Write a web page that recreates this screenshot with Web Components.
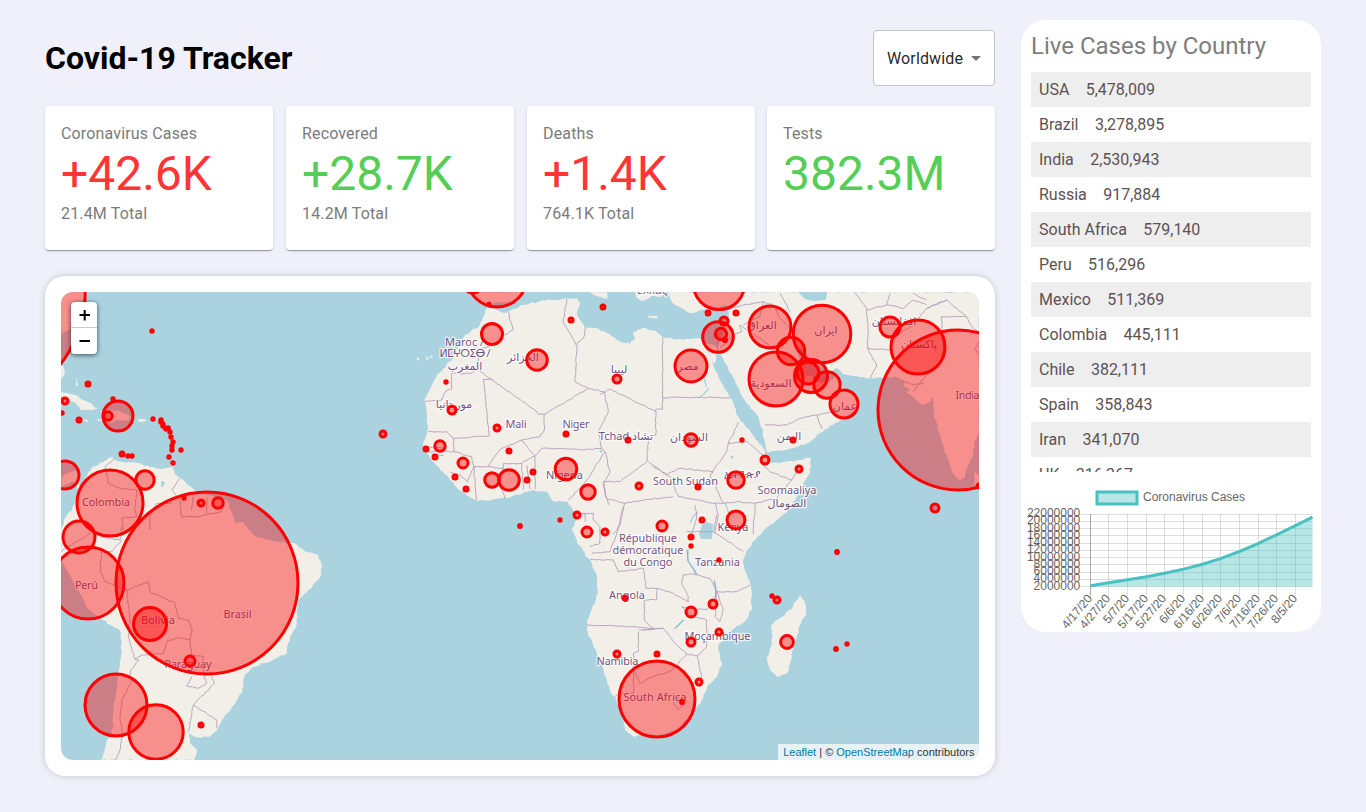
<!DOCTYPE html>
<html lang="en">
<head>
<meta charset="utf-8">
<title>Covid-19 Tracker</title>
<style>
  html, body { margin: 0; }
  body { background: #f0f0fa; font-family: Roboto, sans-serif; min-height: 812px; overflow: hidden; }
</style>
</head>
<body>
<tracker-app></tracker-app>
<script>
class Base extends HTMLElement {
  constructor() {
    super();
    this.attachShadow({ mode: 'open' });
  }
  draw(html) { this.shadowRoot.innerHTML = html; }
}

customElements.define('country-select', class extends Base {
  connectedCallback() {
    this.draw(`<style>
      :host { display: flex; align-items: center; box-sizing: border-box; width: 122px; height: 56px; padding: 0 6px 0 13px; letter-spacing: .13px;
        background: #fff; border: 1px solid #c4c4c4; border-radius: 4px; font-size: 16px; color: rgba(0,0,0,.87); justify-content: space-between; }
      svg { width: 24px; height: 24px; fill: #757575; }
    </style><slot></slot><svg viewBox="0 0 24 24"><path d="M7 10l5 5 5-5z"/></svg>`);
  }
});

customElements.define('info-box', class extends Base {
  connectedCallback() {
    this.draw(`<style>
      :host { display: block; box-sizing: border-box; width: 228px; height: 144px; padding: 16px; background: #fff; border-radius: 4px;
        box-shadow: 0 2px 1px -1px rgba(0,0,0,.2), 0 1px 1px 0 rgba(0,0,0,.14), 0 1px 3px 0 rgba(0,0,0,.12); }
      p { margin: 0; font-size: 16px; line-height: 24px; color: #7b7b7b; letter-spacing: .15px; }
      .label { height: 23px; }
      b { display: block; font-weight: 400; font-size: 48px; line-height: 57px; color: ${this.getAttribute('tone')}; }
    </style><p class="label">${this.getAttribute('label')}</p><b><slot></slot></b><p>${this.getAttribute('total') || ''}</p>`);
  }
});

const LAND = [
  // South America
  '61,478 68,473 75,470 80,479 79,487 83,488 85,478 92,467 103,462 112,457 117,461 123,462 137,463 150,467 162,469 172,467 175,474 180,478 188,485 197,491 207,495 217,497 227,500 232,513 235,523 243,522 257,537 270,540 280,542 293,543 307,552 318,555 322,567 320,577 307,592 298,600 297,623 290,637 287,653 273,660 253,667 244,677 242,693 232,707 222,720 215,732 208,737 195,737 188,733 190,743 197,750 194,760 101,760 107,740 112,733 114,707 117,683 119,670 122,653 120,631 103,620 87,608 77,588 67,570 61,560 61,530 65,518 72,510 77,498 78,488 72,481 61,487',
  // Africa
  '487,308 497,310 505,313 523,305 540,301 563,299 577,298 580,303 577,315 585,327 597,328 607,333 617,340 630,344 635,338 633,332 643,328 657,332 663,337 683,340 697,338 703,341 706,348 713,365 723,385 733,402 737,415 747,428 763,448 766,455 767,462 780,463 800,460 811,458 810,472 800,492 787,512 770,525 757,537 747,550 743,563 747,575 751,587 752,610 743,623 727,633 718,647 722,663 717,677 707,687 703,698 693,713 677,730 660,735 648,734 635,737 625,730 620,707 610,690 603,667 588,633 587,620 598,593 597,577 590,560 577,543 572,530 577,517 573,510 568,502 553,501 547,492 533,490 507,498 477,501 457,488 443,472 430,458 423,445 428,428 427,412 424,400 437,375 453,358 465,335 480,325',
  // Madagascar
  '800,595 805,603 806,615 802,620 793,650 788,672 778,677 770,670 767,657 772,643 771,625 782,617 793,607',
  // Middle East, Iran and South Asia
  '668,292 672,302 677,306 690,313 703,310 717,308 727,305 729,315 727,325 722,335 718,347 708,344 703,341 708,352 714,364 717,352 722,357 732,375 743,398 757,415 763,432 767,452 787,450 810,442 820,433 835,423 850,415 860,402 855,395 843,388 838,375 828,382 817,382 810,375 805,376 802,366 795,348 800,346 808,357 817,365 830,372 836,368 843,374 870,378 897,377 905,382 903,386 910,389 907,393 916,400 923,405 930,402 933,397 934,415 940,435 944,449 950,465 954,475 960,480 965,477 966,470 973,455 974,444 977,435 979,434 979,292',
  '975,472 979,476 979,490 974,485', '61,292 88,292 86,300 83,314 79,322 70,329 61,334', '61,364 64,368 65,374 62,379 61,377',
  '61,392 67,393 75,395 83,400 92,404 98,409 90,410 80,410 76,403 67,398 61,396',
  '100,411 108,410 120,411 131,417 128,421 118,420 110,423 100,420 108,417', '138,419 145,419 146,421 139,422', '97,418 103,420 98,421',
  '470,292 525,292 518,298 507,302 495,303 489,307 483,304 478,300', '590,292 607,292 607,299 600,297',
  '634,292 666,292 660,297 652,296 643,301 636,297', '647,316 657,316 658,318 650,318', '703,314 709,311 712,312 707,316', '76,377 78,385 76,386', '83,420 88,420 87,422', '169,465 175,463 174,467',
  '417,357 420,359 417,361','427,356 429,359 426,360','431,355 433,358 430,358'
];
const LINES = [
  // West Africa
  [350,285,'475,82 490,135 455,155 440,175 385,195 385,255 362,265 305,265 305,312 288,318 275,345 222,350|385,255 560,380 565,388 583,388 715,310 675,290 680,180 705,150 705,125|650,42 640,110 678,180|430,285 400,283 418,453 310,460 290,440 235,440|310,460 312,500 232,500|240,486 282,490|245,508 280,512|312,500 365,515 372,545 352,590 330,570 300,560|372,545 415,545 430,520 455,490 515,465 570,455 583,435 583,388|415,545 460,550 460,535 515,535 555,512 535,490 515,465|372,545 375,600 380,645|460,550 450,600 465,640|515,535 520,615|530,540 540,612|555,515 555,612|555,515 575,490 640,490 700,495 755,490 765,500 715,580 690,610 655,645|755,490 745,440 775,380 762,320 715,310|765,500 780,560 760,600 775,660|665,685 705,685 705,710'],
  // Sahara, the Horn and Arabia
  [600,285,'188,155 188,338 390,338|188,338 188,373 167,373 167,450 145,455 140,530 100,560 60,590 10,590|167,380 32,313 0,328|145,530 210,575 235,635 345,655 370,655 330,570 380,500 385,475 415,412|75,655 130,645 220,635|10,590 20,640 75,655|160,545 200,570 240,550 340,560|385,475 440,470 495,515|480,530 510,560 575,585 530,640 465,655 410,650 370,655|575,585 597,545|465,655 460,748|345,655 355,690 345,745|285,660 290,700 275,745|75,655 60,720 40,748|495,420 560,420 600,400 650,390 715,375|650,390 665,432|360,190 400,150 425,140 420,120 480,160 510,185 545,185|380,75 430,60 490,50 520,60 540,100 570,130|430,120 480,95 490,50|540,25 560,60 570,80|355,155 352,190 358,205'],
  // Iran to India
  [780,285,'225,25 260,70 265,140 262,190 290,240 270,280|262,190 330,195 350,150 400,120 440,70 500,45|260,75 320,60 370,70 400,45 440,60|330,25 320,60|365,285 400,300 430,295|400,320 440,270 480,240 490,190 485,95 560,95 580,130 597,140|597,210 585,190 597,170|440,70 500,45 530,70 560,95|400,25 440,45'],
  // Southern Africa
  [560,500,'90,178 160,180 175,215 250,205 258,265 290,265 290,300 253,300 253,360 280,385 180,378 82,375|290,265 340,280 385,305 385,290 365,250 370,225 400,222|95,160 150,155 170,100 190,20|40,42 100,40 100,60 120,80 120,130 90,140|250,390 310,385 345,430 380,462 412,467 440,440 440,360 400,350|235,395 235,455 220,460 220,580 180,580 165,590|310,385 237,390|220,510 240,550 290,525 330,515 380,462|412,467 425,530 420,560|400,222 450,235 470,275 530,275 570,255|470,275 490,330 480,365 465,350 470,275|460,95 550,155|380,95 460,95 470,45|340,610 360,590 380,605 355,628 340,610|400,350 365,320 440,330 455,310'],
  // South America
  [40,270,'225,565 195,590 205,640 240,655 290,660 285,720 290,740 245,745 250,780|420,625 395,660 420,690 425,740 470,740 545,725 550,690|460,680 455,720|500,680 500,730|330,780 330,740 350,700 395,700'],
  [40,520,'185,95 180,150 195,185 260,210 325,185 330,215 405,250 415,295 445,300 457,330 450,360 415,353 380,365 370,400 305,405 285,418 265,350 270,300 260,210 235,185|285,418 297,420 272,450 272,490 245,540 240,600 248,640 240,690 228,718|450,360 455,405 490,410 490,460 500,490 475,505 440,498 455,470|515,465 523,490 460,555 445,635|460,555 530,600 530,625|63,95 100,70 150,40|245,60 215,95 185,95|180,50 240,60 245,20']
];
const DOTS = `-32,292,117.3 152,331,1.2 88,384,2 65,401,3 62,413,1.2 79,420,2 113,399,1.2 118,416,15 108,416,4.2 153,419,1.2 161,420,1.2 161,422,1.3
163,424,1.2 163,426,1.2 166,429,1.3 168,428,1.3 170,432,1.2 171,437,1.2 173,442,1.2 172,446,1.2 172,450,1.2 181,450,1.2 169,457,1.2 173,463,1.2
122,454,2 128,456,1.2 132,456,1.2 65,475,14 110,503,33 145,480,9.2 184,498,1.2 201,503,3 218,503,5.3 207,583,91 79,537,16 88,583,36
150,624,16.5 190,661,5 116,705,31 156,732,27.2 201,725,2 497,277,30 473,283,10 489,304.5,1.2 492,334,10.5 537,360,10.3 571,320,2 603,307,2
446,382,1.2 452,410,4 497,428,3 566,434,2 509,451,2 440,446,5.2 426,449,2 435,457,2 463,463,5 455,477,2 466,489,2 492,480,7.3 509,480,10.3
533,472,2 527,480,2 566,469,10.8 588,492,7.2 577,515,3 560,520,1.2 520,526,1.4 383,434,3 587,532,5 605,532,3 719,284,25.6 708,313,2
736,313,2 724,321,4 718,337,15.3 721,334,5.7 725,340,1.6 691,366,16 617,379,4 770,327,21 822,334,28.8 791,351,13.7 776,379,27
811,376,16.5 808,373,11 827,385,13.2 844,404,14 691,440,6.3 628,440,2 742,440,1.2 793,440,2 765,460,4 799,469,3 736,480,8.3 639,486,3
698,487,2 662,526,5 702,520,2 736,520,9 691,537,2 691,546,1.2 890,327,10 918,347,27 958,410,80 935,508,4 979,486,2 719,560,1.2
837,552,1.4 625,598,2 691,612,5 713,604,4 691,642,4 719,632,3 617,654,3 657,654,2 657,699,38 682,702,1.4 699,682,3 772,596,1.2
777,600,3 787,642,6.4 836,649,1.4 847,644,1.2`;
// text, centre x, baseline y, width (0 leaves the natural width)
const NAMES = [
  ['Colombia',106,506,48],['Perú',86.5,589,23],['Bolivia',158,624,34],['Brasil',237.5,618,28],['Paraguay',188,668,47],
  ['Maroc /',464.5,346,39],['ⵍⵎⵖⵔⵉⴱ /',465,357,51],['المغرب',465,370,0],['الجزائر',523,361,0],['موريتانيا',454,408,0],
  ['Mali',516,428,21],['Niger',576,428,27],['Nigeria',564.5,479,37],['ليبيا',619,373,0],['مصر',688,370,0],['Tchad تشاد',626,440,0],
  ['السودان',689,441,0],['العراق',762,329,0],['ایران',826,334,0],['السعودية',771,387,0],['عمان',845,410,0],['اليمن',789,440,0],
  ['افغانستان',894,325,0],['پاکستان',919,348,0],['India',967.5,399,24],['ኢትዮጵያ',742,478,0],['South Sudan',685.5,485,65],
  ['Soomaaliya',787,494,59],['الصومال',787,507,0],['Kenya',733,531,31],['République',648,542,58],['démocratique',648,553.5,71],
  ['du Congo',648,566,49],['Tanzania',717.5,566,45],['Angola',627,599,36],['Moçambique',717.5,639.5,66],['Namibia',617.5,665,42],
  ['South Africa',655,701,63],['Ελλάς',652,294,30]
];

// Breaks each straight segment into short irregular steps, the same way on every load.
let seed = 7;
const rnd = () => (seed = (seed * 16807) % 2147483647) / 2147483647 - .5;
function rough(points, amp, close) {
  const out = [];
  const n = points.length;
  for (let i = 0; i < (close ? n : n - 1); i++) {
    const [ax, ay] = points[i], [bx, by] = points[(i + 1) % n];
    const len = Math.hypot(bx - ax, by - ay), k = Math.max(1, Math.round(len / 3));
    out.push([ax, ay]);
    for (let j = 1; j < k; j++) out.push([ax + (bx - ax) * j / k + rnd() * amp, ay + (by - ay) * j / k + rnd() * amp]);
  }
  if (!close) out.push(points[n - 1]);
  return 'M' + out.map(p => p[0].toFixed(1) + ' ' + p[1].toFixed(1)).join('L') + (close ? 'Z' : '');
}
const parse = s => s.trim().split(/\s+/).map(p => p.split(',').map(Number));

customElements.define('world-map', class extends Base {
  connectedCallback() {
    const land = LAND.map(s => rough(parse(s), 1.7, true)).join('');
    const lines = LINES.map(([ox, oy, s]) => s.split('|').map(l => rough(parse(l).map(([x, y]) => [ox + x / 3, oy + y / 3]), 1.1, false)).join('')).join('');
    const names = NAMES.map(([t, x, y, w]) => `<text x="${x}" y="${y}"${w ? ` textLength="${w}"` : ''}>${t}</text>`).join('');
    const dots = parse(DOTS).map(([x, y, r]) => `<circle cx="${x}" cy="${y}" r="${r}"/>`).join('');
    this.draw(`<style>
      :host { display: block; box-sizing: border-box; height: 500px; padding: 16px; background: #fff; border-radius: 20px; box-shadow: 0 0 8px -2px rgba(0,0,0,.3); }
      .frame { position: relative; height: 468px; border-radius: 12px; overflow: hidden; background: #aad3df; }
      .frame > svg { display: block; width: 918px; height: 468px; }
      text { font: 11px "Noto Sans", "DejaVu Sans", sans-serif; fill: #76527f; stroke: #fff; stroke-opacity: .75; stroke-width: 2.5px; paint-order: stroke; text-anchor: middle; stroke-linejoin: round; }
      .dots { fill: red; fill-opacity: .4; stroke: red; stroke-width: 3; }
      .zoom { position: absolute; left: 10px; top: 10px; width: 26px; border-radius: 4px; background: #fff; box-shadow: 0 1px 5px rgba(0,0,0,.65); }
      .zoom span { display: block; height: 25px; }
      .zoom span + span { border-top: 1px solid #ccc; height: 26px; }
      .zoom svg { display: block; width: 26px; height: 25px; stroke: #000; stroke-width: 2; }
      .credit { position: absolute; right: 0; bottom: 0; padding: 0 4.5px 0 5px; background: rgba(255,255,255,.7); color: #333; font: 11px/16px "Liberation Sans", Arial, sans-serif; white-space: nowrap; }
      a { color: #0078a8; }
    </style>
    <div class="frame">
      <svg viewBox="61 292 918 468">
        <path d="${land}" fill="#f2efe9"/>
        <g fill="#aad3df">
          <path d="M798 292h29l-1 8-13 1-8-2z"/><path d="M702 525l4-3 7 2-1 15-11 0-2-5z"/><path d="M161 481l4 1-2 5-2 0z"/>
          <path d="M722 353l-4 9 1-10z"/><circle cx="601" cy="451" r="1.5"/><circle cx="732" cy="457" r="1.5"/>
        </g>
        <g fill="none" stroke="#aad3df" stroke-width="1.4">
          <path d="M688 549l0 12 5 8 3 6M715 582l1 10-1 8M698 398l6-4 5-6M706 387l-2-12M725 502l3 9 6 6M690 523l3-6 5-5M676 628l8-8M232 714l-6 9M725 312l1 20"/>
        </g>
        <path d="M687 550l1 11 6 8 3 6M714 580l2 10-1 8M674 629l9-9" fill="none" stroke="#86afc9" stroke-width="1"/>
        <path d="${lines}" fill="none" stroke="#b79dba" stroke-width=".9" stroke-linejoin="round"/>
        <g>${names}</g>
        <g class="dots">${dots}</g>
      </svg>
      <div class="zoom">
        <span><svg viewBox="0 0 26 25"><path d="M8.5 13h10.5M13.7 8v10.5"/></svg></span>
        <span><svg viewBox="0 0 26 25"><path d="M8.5 13h10.5"/></svg></span>
      </div>
      <div class="credit"><a>Leaflet</a> | © <a>OpenStreetMap</a> contributors</div>
    </div>`);
  }
});

customElements.define('country-table', class extends Base {
  connectedCallback() {
    const rows = [['USA','5,478,009'],['Brazil','3,278,895'],['India','2,530,943'],['Russia','917,884'],['South Africa','579,140'],['Peru','516,296'],
      ['Mexico','511,369'],['Colombia','445,111'],['Chile','382,111'],['Spain','358,843'],['Iran','341,070'],['UK','316,367']];
    this.draw(`<style>
      :host { display: block; height: 400px; overflow: hidden; color: #5d5252; font-size: 16px; }
      div { display: flex; align-items: center; gap: 16.4px; height: 35px; padding: 0 8px; }
      div:nth-of-type(odd) { background: #eee; }
    </style>${rows.map(([c, n]) => `<div><span>${c}</span><span>${n}</span></div>`).join('')}`);
  }
});

customElements.define('cases-chart', class extends Base {
  connectedCallback() {
    const xs = [1090.5,1108.5,1127.5,1146.5,1164.5,1183.5,1202.5,1220.5,1239.5,1258.5,1276.5,1295.5];
    const ds = ['4/17/20','4/27/20','5/7/20','5/17/20','5/27/20','6/6/20','6/16/20','6/26/20','7/6/20','7/16/20','7/26/20','8/5/20'];
    const ys = [514.5,521.5,528.5,535.5,543.5,550.5,557.5,564.5,572.5,579.5,586.5];
    const curve = 'M1090.5 585.7L1108.5 582.7L1127.5 579.7L1146.5 576.7L1164.5 573.3L1183.5 569.1L1202.5 564.3L1220.5 558.6L1239.5 551.5L1258.5 543.4L1276.5 534.8L1295.5 525.7L1312.5 517.2';
    this.draw(`<style>
      :host { display: block; margin: 0 -10px; height: 160px; }
      svg { display: block; width: 300px; height: 160px; }
      text { font: 12px "Liberation Sans", Arial, sans-serif; fill: #666; }
      .end { text-anchor: end; }
    </style>
    <svg viewBox="1021 472 300 160">
      <rect x="1097" y="492" width="40" height="12" fill="rgba(75,192,192,.4)" stroke="#4bc0c0" stroke-width="3"/>
      <text x="1143" y="501.3">Coronavirus Cases</text>
      <path d="${ys.map(y => `M1080 ${y}H1312.5`).join('')}${xs.slice(1).map(x => `M${x} 514V596.5`).join('')}" stroke="rgba(0,0,0,.13)" fill="none"/>
      <path d="M1090.5 514V596.5" stroke="rgba(0,0,0,.32)"/>
      <path d="${curve}V586.5H1090.5Z" fill="rgba(75,192,192,.4)"/>
      <path d="${curve}" fill="none" stroke="#4bc0c0" stroke-width="3" stroke-linejoin="round"/>
      ${ys.map((y, i) => `<text class="end" x="1080.3" y="${(513.2 + i * 7.24 + 4).toFixed(1)}">${22 - 2 * i}000000</text>`).join('')}
      ${xs.map((x, i) => `<text class="end" transform="translate(${x - 1.5} 595.5) rotate(-50)" x="0" y="5">${ds[i]}</text>`).join('')}
    </svg>`);
  }
});

customElements.define('side-panel', class extends Base {
  connectedCallback() {
    this.draw(`<style>
      :host { display: block; box-sizing: border-box; width: 300px; height: 612px; padding: 10px; background: #fff; border-radius: 25px; overflow: hidden; }
      h3 { margin: 0; height: 42px; line-height: 32px; font-size: 24px; font-weight: 400; color: #7d7d7d; white-space: nowrap; }
    </style><h3>Live Cases by Country</h3><slot></slot>`);
  }
});

customElements.define('tracker-app', class extends Base {
  connectedCallback() {
    this.draw(`<style>
      :host { display: flex; align-items: flex-start; justify-content: space-between; padding: 20px 45px; }
      main { width: 950px; padding-top: 10px; }
      header { display: flex; justify-content: space-between; align-items: center; }
      h1 { margin: 0; font-size: 32px; font-weight: 700; color: #000; }
      .stats { display: grid; grid-template-columns: 241px 241px 240px 228px; margin: 20px 0 26px; }
    </style>
    <main>
      <header><h1>Covid-19 Tracker</h1><country-select>Worldwide</country-select></header>
      <div class="stats">
        <info-box label="Coronavirus Cases" total="21.4M Total" tone="#ff3434">+42.6K</info-box>
        <info-box label="Recovered" total="14.2M Total" tone="#55ce55">+28.7K</info-box>
        <info-box label="Deaths" total="764.1K Total" tone="#ff3434">+1.4K</info-box>
        <info-box label="Tests" tone="#55ce55">382.3M</info-box>
      </div>
      <world-map></world-map>
    </main>
    <side-panel><country-table></country-table><cases-chart></cases-chart></side-panel>`);
  }
});
</script>
</body>
</html>
